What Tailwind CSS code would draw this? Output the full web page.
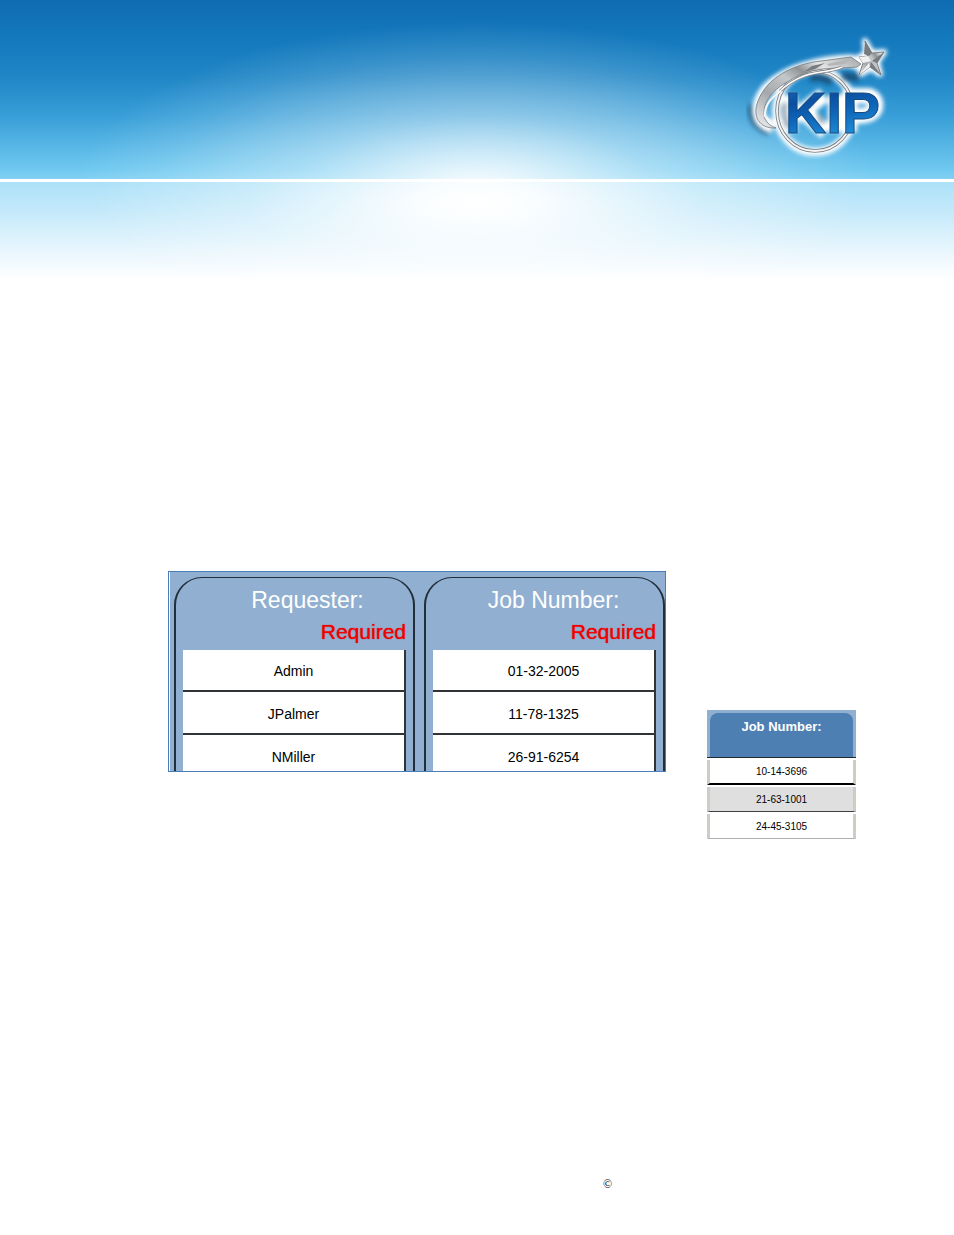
<!DOCTYPE html>
<html lang="en">
<head>
<meta charset="utf-8">
<meta name="viewport" content="width=device-width, initial-scale=1">
<title>KIP</title>
<script src="https://cdn.jsdelivr.net/npm/@tailwindcss/browser@4"></script>
</head>
<body class="flex min-h-screen flex-col bg-white font-['Liberation_Sans',Arial,sans-serif] text-black">
<header>
  <div class="flex h-[179px] justify-end bg-[radial-gradient(ellipse_42%_94%_at_50%_106%,rgba(255,255,255,0.96)_0%,rgba(255,255,255,0.72)_19%,rgba(255,255,255,0.42)_44%,rgba(255,255,255,0.29)_60%,rgba(255,255,255,0.12)_80%,transparent_100%),linear-gradient(to_bottom,#106bb2_0%,#1378bc_20%,#2086c6_43%,#399fd8_65%,#70c9f0_95%,#82d0f2_100%)] pt-[25px] pr-[49px]">
    <svg class="h-[140px] w-[170px]" viewBox="0 0 170 140" role="img" aria-label="KIP">
      <defs>
        <filter id="glow" x="-20%" y="-20%" width="140%" height="140%"><feGaussianBlur stdDeviation="2"/></filter>
        <filter id="shade" x="-30%" y="-30%" width="160%" height="160%"><feGaussianBlur stdDeviation="2.5"/></filter>
        <linearGradient id="silver" x1="0" y1="1" x2="1" y2="0"><stop offset="0" stop-color="#f2f2f2"/><stop offset=".3" stop-color="#a4a8ac"/><stop offset=".5" stop-color="#c5c7c9"/><stop offset=".62" stop-color="#8f9396"/><stop offset=".75" stop-color="#e4e4e4"/><stop offset="1" stop-color="#a2a5a8"/></linearGradient>
        <linearGradient id="blue" x1="0" y1="0" x2=".3" y2="1"><stop offset="0" stop-color="#1c70c4"/><stop offset=".35" stop-color="#0b4fa2"/><stop offset=".6" stop-color="#0e66b8"/><stop offset="1" stop-color="#2394de"/></linearGradient>
      </defs>
      <path d="M17 80Q14 99 34 107" fill="none" stroke="#123e5e" stroke-width="7" opacity=".7" filter="url(#shade)"/>
      <g fill="none" stroke="#fff" filter="url(#glow)" stroke-linejoin="round">
        <path d="M38 102C21 98 20 81 31 66C50 44 88 37 116 36L126 40" stroke-width="13"/>
        <ellipse cx="80" cy="86" rx="39" ry="41" stroke-width="8"/>
        <path d="M130 16L137 28L149 27L142 37L145 49L136 43L125 49L128 37L123 33L131 29Z" fill="#fff" stroke-width="6"/>
        <path d="M54 70V107M60 92L89 70M68 86L91 107M101 70V107M114 107V71H134Q142 74 140 83Q137 92 116 91" stroke-width="16"/>
      </g>
      <g fill="none" stroke="#123e5e" opacity=".75" filter="url(#shade)">
        <path d="M75 54Q86 49 96 58M107 51L124 53" stroke-width="7"/>
        <path d="M50 78Q47 92 54 103M78 76L70 83M84 90L88 98" stroke-width="3"/>
      </g>
      <ellipse cx="80" cy="86" rx="38" ry="40" fill="none" stroke="#777c80" stroke-width="3.5"/>
      <ellipse cx="80" cy="86" rx="38" ry="40" fill="none" stroke="#f5f5f5" stroke-width="1.8"/>
      <path d="M41 103C24 104 17 91 23 76C32 52 59 39 86 36L116 32L126 39L122 42L106 43C84 43 67 47 54 56C35 66 26 80 30 94Q34 101 41 103Z" fill="url(#silver)" stroke="#74797d" stroke-width=".8"/>
      <path d="M77 41L90 38L80 44L69 47Z" fill="#777c80"/>
      <path d="M92 39L115 34L110 39L94 41Z" fill="#b4b6b8"/>
      <path d="M45 66Q62 50 86 47Q100 45 107 42" fill="none" stroke="#7d8286" stroke-width="3"/>
      <path d="M45 66Q62 50 86 47Q100 45 107 42" fill="none" stroke="#fff" stroke-width="1.5"/>
      <path d="M46 66Q29 77 30 91L40 101" fill="none" stroke="#f5f5f5" stroke-width="2"/>
      <path d="M130 16L137 28L149 27L142 38L146 50L135 42L124 50L128 38L124 32L133 31Z" fill="url(#silver)" stroke="#676c70" stroke-width=".8"/>
      <path d="M130 16L137 28L134 31L129 29ZM149 27L137 36L142 38ZM146 50L136 37L135 42Z" fill="#777b7f"/>
      <path d="M136 36L128 38L124 32L133 31ZM135 42L124 50L134 38Z" fill="#f0f0f0"/>
      <text x="50" y="108" font-family="Liberation Sans, Arial, sans-serif" font-size="57" font-weight="700" fill="url(#blue)" stroke="#174b7d" stroke-width="1">KIP</text>
    </svg>
  </div>
  <div class="h-[3px] bg-white"></div>
  <div class="h-[98px] bg-[radial-gradient(ellipse_40%_130%_at_50%_20%,white_0%,rgba(255,255,255,0.92)_15%,rgba(255,255,255,0.75)_28%,rgba(255,255,255,0.3)_60%,transparent_100%),linear-gradient(to_bottom,#ace1f8_0%,#c4e9fa_30%,#e8f6fd_70%,white_100%)]"></div>
</header>

<main class="flex flex-1 items-start gap-[41px] pt-[291px] pl-[168px]">
  <div class="flex h-[201px] w-[498px] shrink-0 gap-[9px] overflow-hidden border border-[#4a7ebb] bg-[#91afd0] pt-[5px] shadow-[inset_1px_0_0_white]">
    <section class="ml-[5px] h-[220px] w-[241px] shrink-0 rounded-t-[28px] border-2 border-t border-[#17202a]/90 px-[7px]" aria-labelledby="requester">
      <h2 id="requester" class="pt-[8px] pl-[26px] text-center text-[23px] leading-[28px] text-white">Requester:</h2>
      <p class="pt-[4px] text-right text-[21px] leading-[28px] text-[#f00000] text-shadow-[0_0_1px_#f00000]">Required</p>
      <div class="flex flex-col pt-[4px] text-sm">
        <button class="h-[42px] border-r-2 border-b-2 border-[#303437] bg-white pt-[2px]">Admin</button>
        <button class="h-[43px] border-r-2 border-b-2 border-[#303437] bg-white pt-[2px]">JPalmer</button>
        <button class="h-[43px] border-r-2 border-b-2 border-[#303437] bg-white pt-[2px]">NMiller</button>
      </div>
    </section>
    <section class="h-[220px] w-[241px] shrink-0 rounded-t-[28px] border-2 border-t border-[#17202a]/90 px-[7px]" aria-labelledby="job">
      <h2 id="job" class="pt-[8px] pl-[18px] text-center text-[23px] leading-[28px] text-white">Job Number:</h2>
      <p class="pt-[4px] text-right text-[21px] leading-[28px] text-[#f00000] text-shadow-[0_0_1px_#f00000]">Required</p>
      <div class="flex flex-col pt-[4px] text-sm">
        <button class="h-[42px] border-r-2 border-b-2 border-[#303437] bg-white pt-[2px]">01-32-2005</button>
        <button class="h-[43px] border-r-2 border-b-2 border-[#303437] bg-white pt-[2px]">11-78-1325</button>
        <button class="h-[43px] border-r-2 border-b-2 border-[#303437] bg-white pt-[2px]">26-91-6254</button>
      </div>
    </section>
  </div>

  <section class="mt-[139px] flex w-[149px] shrink-0 flex-col text-[10px]" aria-labelledby="job-list">
    <div class="h-[48px] border-b border-[#202830] bg-[#91afd0] px-[3px] pt-[3px]">
      <h2 id="job-list" class="h-full rounded-t-[8px] bg-[#4d7fb2] pt-[5px] text-center text-[13px] leading-[18px] font-bold text-white">Job Number:</h2>
    </div>
    <button class="mt-[2px] h-[25px] border-x-3 border-b-2 border-x-[#d0ccc5] border-b-black bg-white">10-14-3696</button>
    <button class="mt-[2px] h-[25px] border-x-3 border-b border-x-[#d0ccc5] border-b-[#404040] bg-[#dfdfdf]">21-63-1001</button>
    <button class="mt-[2px] h-[25px] border-x-3 border-b border-x-[#d0ccc5] border-b-[#b0b0b0] bg-white">24-45-3105</button>
  </section>
</main>

<footer class="h-[59px] pl-[603px] font-['Liberation_Serif',serif] text-xs leading-[16px]">©</footer>
</body>
</html>
